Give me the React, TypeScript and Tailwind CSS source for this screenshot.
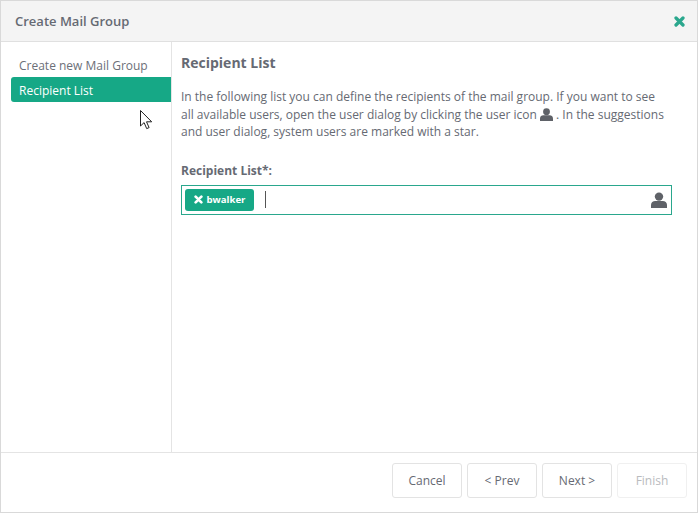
const buttons = [
  { label: 'Cancel', disabled: false },
  { label: '< Prev', disabled: false },
  { label: 'Next >', disabled: false },
  { label: 'Finish', disabled: true },
];

function UserIcon({ className }: { className: string }) {
  return (
    <svg viewBox="0 0 16 16" className={className} fill="currentColor">
      <circle cx="8" cy="4.6" r="4.2" />
      <path d="M0 16v-3.2C0 10.4 2 9 4.2 9h7.6C14 9 16 10.4 16 12.8V16z" />
    </svg>
  );
}

function TimesIcon({ className }: { className: string }) {
  return (
    <svg viewBox="0 0 12 12" className={className} fill="none" stroke="currentColor" strokeWidth="3.6" strokeLinecap="round">
      <path d="M2.2 2.2l7.6 7.6M9.8 2.2l-7.6 7.6" />
    </svg>
  );
}

export default function App() {
  return (
    <div className="relative h-[513px] w-[698px] overflow-hidden bg-white font-['Open_Sans',sans-serif] text-[12px] text-[#666a73]">
      <div className="flex h-full flex-col border border-[#d9d9d9]">
        {/* header */}
        <div className="flex h-[41px] shrink-0 items-center justify-between border-b border-[#e0e0e0] bg-[#f4f4f4] pl-[14px] pr-[12px]">
          <h1 className="pt-[2px] text-[13px] font-semibold text-[#666a73]">Create Mail Group</h1>
          <TimesIcon className="h-[11px] w-[11px] text-[#2aa78d]" />
        </div>

        <div className="flex min-h-0 flex-1">
          {/* wizard steps */}
          <div className="w-[171px] shrink-0 border-r border-[#e4e4e4] pl-[10px] pt-[10px]">
            <div className="flex h-[25px] items-center pl-[8px] pt-[2px] text-[#6c6f78]">Create new Mail Group</div>
            <div className="flex h-[25px] items-center rounded-l-[3px] bg-[#16a886] pl-[8px] pt-[2px] text-white">Recipient List</div>
          </div>

          {/* content */}
          <div className="min-w-0 flex-1 pl-[9px] pr-[25px] pt-[11px]">
            <h2 className="text-[14px] font-bold leading-[20px] text-[#666a73]">Recipient List</h2>
            <p className="mt-[15px] w-[488px] text-[12px] leading-[17.5px]">
              In the following list you can define the recipients of the mail group. If you want to see all available users, open the user dialog by clicking the user icon{' '}
              <UserIcon className="inline h-[13px] w-[13px] align-[-2px] text-[#5f6268]" /> . In the suggestions and user dialog, system users are marked with a star.
            </p>
            <label className="mt-[21px] block text-[12px] font-bold leading-[17px]">Recipient List*:</label>
            <div className="mt-[6px] flex h-[30px] w-[491px] items-center border border-[#2aa78d] pl-[3px] pr-[4px]">
              <span className="flex h-[22px] w-[69px] items-center justify-center gap-[4px] rounded-[3px] bg-[#16a886] pt-[2px] text-[9.6px] font-bold text-white">
                <TimesIcon className="-mt-[2px] h-[9px] w-[9px]" />
                bwalker
              </span>
              <span className="ml-[11px] h-[17px] w-px bg-[#555]" />
              <UserIcon className="ml-auto h-[16px] w-[16px] text-[#5f6268]" />
            </div>
          </div>
        </div>

        {/* footer */}
        <div className="flex h-[60px] shrink-0 items-start justify-end gap-[5px] border-t border-[#e4e4e4] pr-[10px] pt-[10px]">
          {buttons.map((b) => (
            <button
              key={b.label}
              className={`h-[35px] w-[70px] rounded-[3px] border text-[12px] ${b.disabled ? 'border-[#f0f0f0] text-[#b9bbbe]' : 'border-[#e3e3e3] text-[#666a73]'}`}
            >
              {b.label}
            </button>
          ))}
        </div>
      </div>

      {/* mouse cursor */}
      <svg viewBox="0 0 13 20" className="absolute left-[140px] top-[110px] h-[20px] w-[13px]">
        <path d="M.5.5v15.5l3.6-3.4 2.6 6 2.4-1-2.6-5.8h5.2z" fill="#fff" stroke="#222" strokeWidth="1" />
      </svg>
    </div>
  );
}
